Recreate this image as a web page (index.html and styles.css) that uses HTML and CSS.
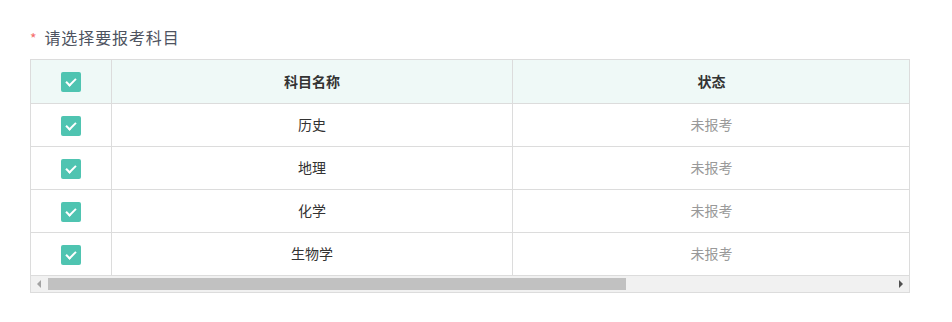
FILE: index.html
```html
<!DOCTYPE html>
<html lang="zh-CN">
<head>
<meta charset="UTF-8">
<meta name="viewport" content="width=device-width, initial-scale=1.0">
<title>报考科目</title>
<link rel="stylesheet" href="styles.css">
</head>
<body>
<div class="subject-form">
    <div class="form-label"><span class="required">*</span>请选择要报考科目</div>

    <!-- 科目列表，可横向滚动 -->
    <div class="table-wrap">
        <div class="table-view">
            <table class="subject-table">
                <thead>
                    <tr>
                        <th class="col-check"><span class="checkbox checked"></span></th>
                        <th class="col-name">科目名称</th>
                        <th class="col-status">状态</th>
                        <th class="col-extra"></th>
                    </tr>
                </thead>
                <tbody>
                    <tr>
                        <td class="col-check"><span class="checkbox checked"></span></td>
                        <td>历史</td>
                        <td class="status">未报考</td>
                        <td></td>
                    </tr>
                    <tr>
                        <td class="col-check"><span class="checkbox checked"></span></td>
                        <td>地理</td>
                        <td class="status">未报考</td>
                        <td></td>
                    </tr>
                    <tr>
                        <td class="col-check"><span class="checkbox checked"></span></td>
                        <td>化学</td>
                        <td class="status">未报考</td>
                        <td></td>
                    </tr>
                    <tr>
                        <td class="col-check"><span class="checkbox checked"></span></td>
                        <td>生物学</td>
                        <td class="status">未报考</td>
                        <td></td>
                    </tr>
                </tbody>
            </table>
        </div>

        <!-- 横向滚动条 -->
        <div class="hscroll">
            <span class="hscroll-btn left"></span>
            <div class="hscroll-track"><div class="hscroll-thumb"></div></div>
            <span class="hscroll-btn right"></span>
        </div>
    </div>
</div>
</body>
</html>
```

FILE: styles.css
```css
body {
    margin: 0;
    font-family: "Microsoft YaHei", "Noto Sans CJK SC", "Noto Sans", sans-serif;
    color: #333;
    background: #fff;
}

.subject-form {
    padding: 26px 0 0 30px;
    width: 880px;
}

.form-label {
    font-size: 16px;
    line-height: 22px;
    letter-spacing: 0.9px;
    color: #4e5360;
    margin-bottom: 10px;
}

.required {
    color: #f56c6c;
    font-size: 14px;
    margin-right: 7px;
}

.table-wrap {
    border: 1px solid #dcdcdc;
}

.table-view {
    overflow: hidden;
}

.subject-table {
    border-collapse: collapse;
    table-layout: fixed;
    width: 1290px;
    font-size: 14px;
}

.subject-table th,
.subject-table td {
    height: 40px;
    padding: 0 0 2px;
    text-align: center;
    border-left: 1px solid #dcdcdc;
    border-bottom: 1px solid #dcdcdc;
}

.subject-table th:first-child,
.subject-table td:first-child {
    border-left: none;
}

.subject-table th {
    height: 41px;
    background: #eff9f7;
    font-weight: bold;
    color: #333;
}

.col-check { width: 80px; }
.col-name { width: 400px; }
.col-status { width: 397px; }

.status {
    color: #999;
}

.checkbox {
    display: inline-block;
    width: 20px;
    height: 20px;
    margin-top: 2px;
    border-radius: 2px;
    background: #4fc4b1;
    position: relative;
    vertical-align: middle;
}

/* 白色对勾 */
.checkbox.checked::after {
    content: "";
    position: absolute;
    left: 7px;
    top: 4px;
    width: 4px;
    height: 8px;
    border: solid #fff;
    border-width: 0 2px 2px 0;
    transform: rotate(45deg);
}

/* 滚动条 */
.hscroll {
    display: flex;
    height: 16px;
    background: #f1f1f1;
}

.hscroll-btn {
    width: 16px;
    display: flex;
    align-items: center;
    justify-content: center;
}

.hscroll-btn::before {
    content: "";
    border-top: 4px solid transparent;
    border-bottom: 4px solid transparent;
}

.hscroll-btn.left::before {
    border-right: 4px solid #a3a3a3;
}

.hscroll-btn.right::before {
    border-left: 4px solid #505050;
}

.hscroll-track {
    flex: 1;
    padding: 2px 0 2px 1px;
}

.hscroll-thumb {
    width: 578px;
    height: 12px;
    background: #c1c1c1;
}
```
